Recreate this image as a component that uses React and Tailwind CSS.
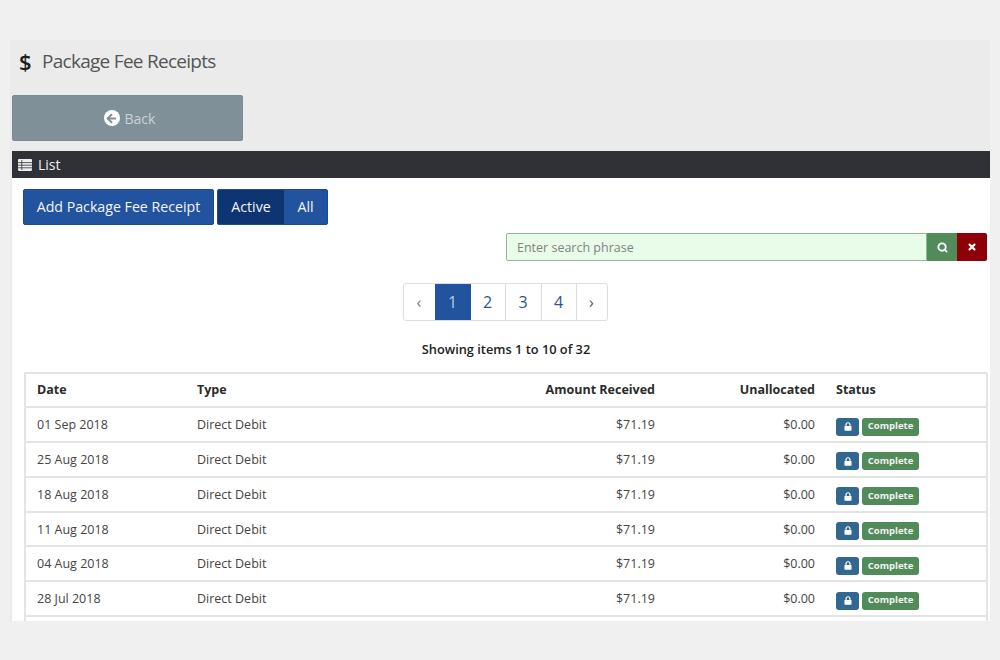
import { ArrowLeft, Search, X } from 'lucide-react'

const rows = ['01 Sep 2018', '25 Aug 2018', '18 Aug 2018', '11 Aug 2018', '04 Aug 2018', '28 Jul 2018']

function ListIcon() {
  return (
    <svg width="14" height="12" viewBox="0 0 14 12" className="fill-[#f0f0f0]">
      <path d="M0 1.2C0 .5.5 0 1.2 0h11.6c.7 0 1.2.5 1.2 1.2v9.6c0 .7-.5 1.2-1.2 1.2H1.2C.5 12 0 11.500 0 10.800z" />
      <path d="M0 3.600h14M0 6.200h14M0 8.800h14M3.800 1v10" stroke="#2f3136" strokeWidth="0.8" />
    </svg>
  )
}

function LockIcon() {
  return (
    <svg width="8" height="9" viewBox="0 0 9 10">
      <path d="M2.300 4.500V3a2.200 2.200 0 0 1 4.400 0v1.500" fill="none" stroke="#ffffff" strokeWidth="1.300" />
      <rect x="0.500" y="4.300" width="8" height="5.500" rx="0.800" fill="#ffffff" />
    </svg>
  )
}

function Row({ date }) {
  return (
    <div className="flex h-[34.8px] items-center border-b-2 border-[#e4e4e4] pt-[2px] text-[12.5px] text-[#444444]">
      <div className="w-[171px] pl-[11px]">{date}</div>
      <div className="w-[69px] whitespace-nowrap">Direct Debit</div>
      <div className="w-[389px] text-right">$71.19</div>
      <div className="w-[160px] text-right">$0.00</div>
      <div className="flex flex-1 items-center gap-[3px] pl-[21px] pt-[2px]">
        <span className="flex h-[18px] w-[23px] items-center justify-center rounded-[3px] bg-[#32688f]">
          <LockIcon />
        </span>
        <span className="flex h-[18px] w-[57px] items-center justify-center rounded-[3px] bg-[#528b5a] text-[9.5px] font-bold text-[#f2f2f2]">
          Complete
        </span>
      </div>
    </div>
  )
}

export default function App() {
  return (
    <main className="h-[660px] overflow-hidden bg-[#f0f0f0] pt-10 pl-[10px] pr-[10px] font-['Open_Sans',sans-serif]">
      <div className="h-[581px] overflow-hidden bg-[#ebebeb]">
        <div className="flex h-[42px] items-center pl-[9px]">
          <span className="w-[23px] text-[22px] font-semibold leading-none text-[#1d1d1d]">$</span>
          <h1 className="text-[19px] tracking-[-0.72px] text-[#555555]">Package Fee Receipts</h1>
        </div>

        <div className="ml-[2px] mt-[13px] flex h-[46px] w-[231px] items-center justify-center gap-[5px] rounded-[2px] border border-[#7b8b92] bg-[#7f9098] pl-1 text-[14px] text-[#c9d2d6]">
          <span className="flex h-4 w-4 items-center justify-center rounded-full bg-white">
            <ArrowLeft size={13} strokeWidth={3.500} className="text-[#7f9098]" />
          </span>
          Back
        </div>

        <div className="ml-[2px] mt-[10px] flex h-[27px] items-center gap-[6px] bg-[#2f3136] pl-[6px] text-[14px] text-[#f0f0f0]">
          <ListIcon />
          List
        </div>

        <section className="ml-[2px] h-[443px] bg-white px-3 pt-[11px]">
          <div className="-ml-px flex gap-[3px] text-[14.2px] text-[#f2f5fa]">
            <div className="flex h-9 w-[191px] items-center justify-center rounded-[2px] border border-[#1d4a8a] bg-[#22539f]">
              Add Package Fee Receipt
            </div>
            <div className="flex overflow-hidden rounded-[2px] border border-[#1d4a8a] bg-[#22539f]">
              <div className="flex w-[66px] items-center justify-center bg-[#0e3571]">Active</div>
              <div className="flex w-[43px] items-center justify-center">All</div>
            </div>
          </div>

          <div className="ml-[482px] mt-2 flex h-7 w-[481px]">
            <div className="flex flex-1 items-center rounded-l-[2px] border border-[#8fb98f] bg-[#e9fbe9] pl-[10px] pt-[2px] text-[12.5px] text-[#7d8580]">
              Enter search phrase
            </div>
            <div className="flex w-[30px] items-center justify-center bg-[#528b5a]">
              <Search size={11} strokeWidth={4} className="text-white" />
            </div>
            <div className="flex w-[30px] items-center justify-center rounded-r-[2px] bg-[#8d0007]">
              <X size={10} strokeWidth={5} className="text-white" />
            </div>
          </div>

          <div className="mt-[22px] flex justify-center pl-[8px] text-[16px] text-[#2c5591]">
            <div className="flex h-[38px] overflow-hidden rounded-[3px] border border-[#dddddd]">
              <div className="flex w-[31px] items-center justify-center text-[#7b7b7b]">‹</div>
              <div className="flex w-[36px] items-center justify-center bg-[#22539f] text-[#b9cbe6]">1</div>
              <div className="flex w-[35px] items-center justify-center border-r border-[#dddddd]">2</div>
              <div className="flex w-[36px] items-center justify-center border-r border-[#dddddd]">3</div>
              <div className="flex w-[35px] items-center justify-center border-r border-[#dddddd]">4</div>
              <div className="flex w-[30px] items-center justify-center text-[#555555]">›</div>
            </div>
          </div>

          <p className="mt-[19px] pl-[10px] text-center text-[12.8px] font-semibold text-[#222222]">
            Showing items 1 to 10 of 32
          </p>

          <div className="mt-[13px] w-[964px] border-2 border-b-0 border-[#e4e4e4]">
            <div className="flex h-[34px] items-center border-b-2 border-[#e4e4e4] pt-px text-[12.5px] font-bold text-[#2b2b2b]">
              <div className="w-[171px] pl-[11px]">Date</div>
              <div className="w-[69px]">Type</div>
              <div className="w-[389px] text-right">Amount Received</div>
              <div className="w-[160px] text-right">Unallocated</div>
              <div className="flex-1 pl-[21px]">Status</div>
            </div>
            {rows.map((d) => (
              <Row key={d} date={d} />
            ))}
            <div className="h-10" />
          </div>
        </section>
      </div>
    </main>
  )
}
